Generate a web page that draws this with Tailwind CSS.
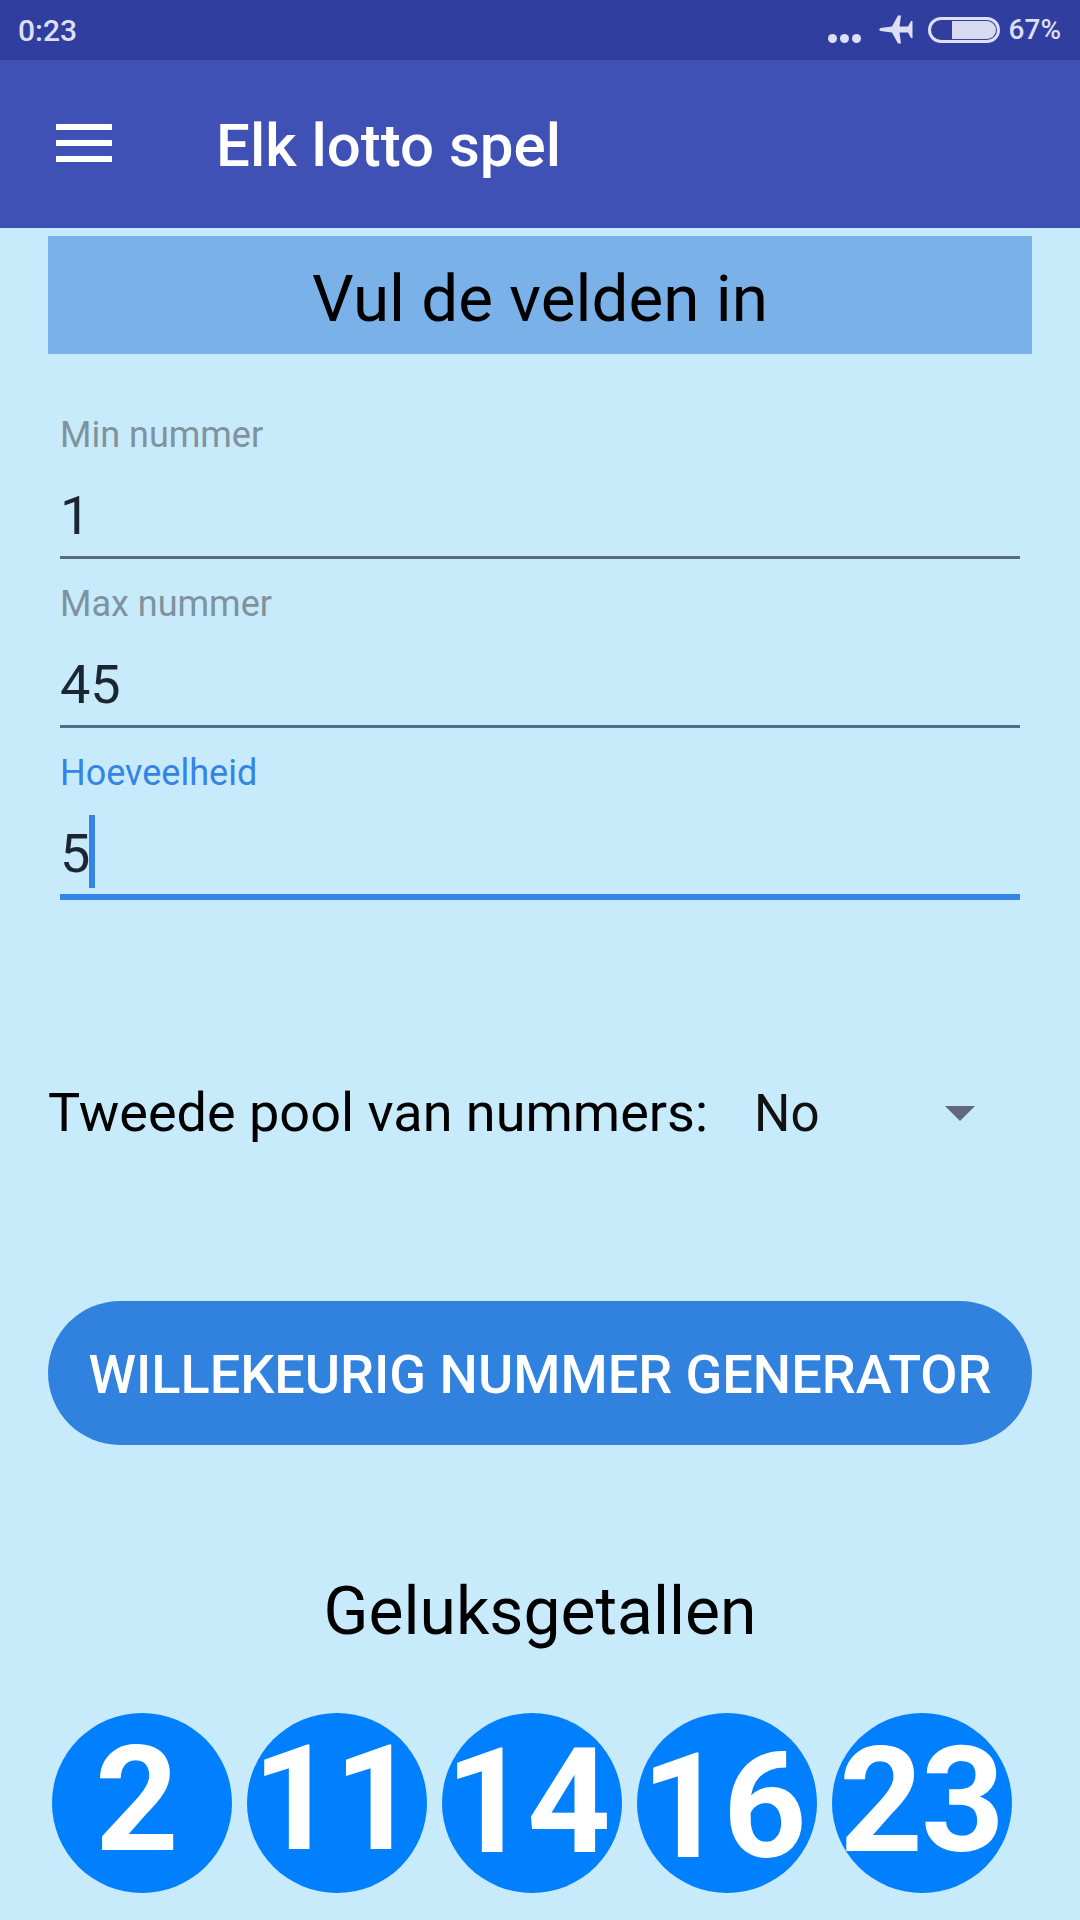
<!DOCTYPE html>
<html><head><meta charset="utf-8"><script src="https://cdn.jsdelivr.net/npm/@tailwindcss/browser@4"></script></head>
<body>
<div class="w-[1080px] h-[1920px] overflow-hidden bg-[#c8ebfc] font-['Roboto',sans-serif] flex flex-col">
  <div class="h-[60px] bg-[#303f9f] flex items-center justify-between pl-[18px] pr-[19px] text-[#dcdff5] text-[28px] font-medium">
    <span class="text-[30px]">0:23</span>
    <div class="flex items-center">
      <div class="flex gap-[3px] mt-[17px] mr-[18px]"><i class="block w-[9px] h-[9px] rounded-full bg-[#dcdff5]"></i><i class="block w-[9px] h-[9px] rounded-full bg-[#dcdff5]"></i><i class="block w-[9px] h-[9px] rounded-full bg-[#dcdff5]"></i></div>
      <svg class="w-[34px] h-[29px] mr-[15px] -mt-[2px]" viewBox="0 0 34 29" fill="#dcdff5"><path d="M0 14.5 L1.5 13 L13 11.5 L19 0.5 L22 0.5 L20.5 11.5 L29 11.5 L32 6 L33.5 6 L33.5 23 L32 23 L29 17.5 L20.5 17.5 L22 28.5 L19 28.5 L13 17.5 L1.5 16 Z"/></svg>
      <div class="w-[72px] h-[26px] rounded-full border-[3px] border-[#dcdff5] py-[1px] pr-[1px] mr-[9px] flex justify-end"><div class="w-[44px] h-full bg-[#d8daf0] rounded-r-full"></div></div>
      <span>67%</span>
    </div>
  </div>
  <div class="h-[168px] bg-[#3f51b5] flex items-center text-white">
    <svg class="w-[56px] h-[40px] ml-[56px]" viewBox="0 0 56 40" fill="#fff"><rect width="56" height="6" y="0"/><rect width="56" height="6" y="16"/><rect width="56" height="6" y="32"/></svg>
    <span class="ml-[104px] mt-[4px] text-[60px] font-medium leading-none">Elk lotto spel</span>
  </div>
  <div class="mx-[48px] mt-[8px] h-[118px] pt-[8px] bg-[#7ab1e9] flex items-center justify-center text-[65.6px] text-black leading-none">Vul de velden in</div>
  <div class="mx-[60px] mt-[62px] flex flex-col">
    <div class="h-[169px]">
      <div class="text-[36px] leading-[38px] text-[#7f929e]">Min nummer</div>
      <div class="mt-[32px] text-[54px] leading-[60px] text-[#1a2733]">1</div>
      <div class="mt-[10px] h-[3px] bg-[#566b7d]"></div>
    </div>
    <div class="h-[169px]">
      <div class="text-[36px] leading-[38px] text-[#7f929e]">Max nummer</div>
      <div class="mt-[32px] text-[54px] leading-[60px] text-[#1a2733]">45</div>
      <div class="mt-[10px] h-[3px] bg-[#566b85]"></div>
    </div>
    <div class="h-[169px]">
      <div class="text-[36px] leading-[38px] text-[#3583e4]">Hoeveelheid</div>
      <div class="mt-[32px] h-[60px] text-[54px] leading-[60px] text-[#1a2733] flex items-center"><span>5</span><span class="w-[6px] h-[73px] shrink-0 bg-[#3583e4] -ml-[1px] -mt-[5px]"></span></div>
      <div class="mt-[10px] h-[6px] bg-[#3583e4]"></div>
    </div>
  </div>
  <div class="mx-[48px] mt-[160px] flex items-center h-[60px] text-[54px] text-black leading-none">
    <span class="w-[708px] whitespace-nowrap">Tweede pool van nummers:</span>
    <span class="text-[51px] text-[#111] -ml-[2px]">No</span>
    <svg class="ml-[126px] w-[30px] h-[15px]" viewBox="0 0 30 15" fill="#5f6b7d"><path d="M0 0H30L15 15Z"/></svg>
  </div>
  <div class="mx-[48px] mt-[158px] h-[144px] pt-[2px] rounded-full bg-[#3082de] flex items-center justify-center text-white text-[54px] font-medium whitespace-nowrap">WILLEKEURIG NUMMER GENERATOR</div>
  <div class="mt-[127px] text-center text-[66px] leading-[80px] text-black">Geluksgetallen</div>
  <div class="mt-[61px] ml-[52px] flex gap-[15px] font-['Roboto',sans-serif] font-bold text-white text-[146px] leading-none tracking-[-2px] [font-kerning:none]">
    <div class="w-[180px] h-[180px] rounded-full bg-[#007fff] flex items-center justify-center"><span class="-translate-x-[6px] -translate-y-[2px]">2</span></div>
    <div class="w-[180px] h-[180px] rounded-full bg-[#007fff] flex items-center justify-center"><span class="-translate-x-[3px] -translate-y-[3px]">11</span></div>
    <div class="w-[180px] h-[180px] rounded-full bg-[#007fff] flex items-center justify-center"><span class="-translate-x-[5px]">14</span></div>
    <div class="w-[180px] h-[180px] rounded-full bg-[#007fff] flex items-center justify-center"><span class="-translate-x-[4px] translate-y-[5px]">16</span></div>
    <div class="w-[180px] h-[180px] rounded-full bg-[#007fff] flex items-center justify-center"><span class="-translate-x-[1px] -translate-y-[1px]">23</span></div>
  </div>
</div>
</body></html>
